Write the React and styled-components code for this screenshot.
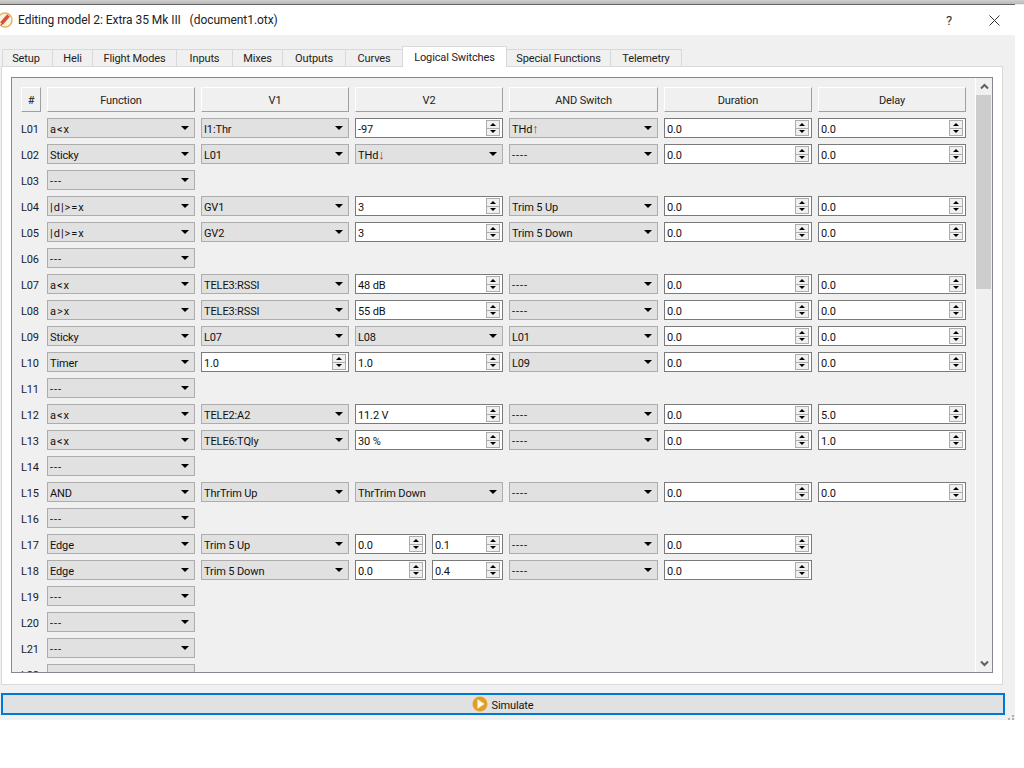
import React from "react";
import styled, { createGlobalStyle } from "styled-components";

const GlobalStyle = createGlobalStyle`
  html, body {
    margin: 0;
    padding: 0;
    background: #fff;
  }
  body {
    font-family: Roboto, "Open Sans", "Liberation Sans", sans-serif;
    font-size: 11px;
    letter-spacing: -0.12px;
    color: #000;
    overflow: hidden;
  }
`;

const Page = styled.div`
  width: 1024px;
  height: 768px;
  overflow: hidden;
  background: #fff;
`;

const Desktop = styled.div`
  height: 5px;
  background: linear-gradient(#cfcfcf, #bdbdbd 70%, #fff);
`;

const DesktopEdge = styled.div`
  height: 4px;
  width: 1015px;
  background: linear-gradient(#d0d0d0, #b8b8b8);
  border-bottom: 1px solid #666;
`;

const Dialog = styled.div`
  width: 1015px;
`;

const TitleBar = styled.div`
  height: 30px;
  display: flex;
  align-items: center;
  background: #fff;
  font-size: 12px;
  letter-spacing: -0.05px;
  color: #222;
`;

const TitleText = styled.span`
  margin-left: 5px;
  flex: 1;
  white-space: pre;
`;

const HelpMark = styled.span`
  font-size: 13px;
  margin-right: 37px;
  color: #333;
`;

const CloseMark = styled.svg`
  width: 11px;
  height: 11px;
  margin-right: 15px;
`;

const Body = styled.div`
  height: 685px;
  background: #f0f0f0;
  padding: 11px 0 0 1px;
  box-sizing: border-box;
  position: relative;
`;

const TabBar = styled.div`
  display: flex;
  align-items: flex-end;
  height: 21px;
  padding-left: 1px;
  position: relative;
  z-index: 1;
  margin-bottom: -1px;
`;

const Tab = styled.div`
  width: ${p => p.$w}px;
  height: ${p => (p.$active ? 21 : 18)}px;
  box-sizing: border-box;
  display: flex;
  align-items: center;
  justify-content: center;
  background: ${p => (p.$active ? "#fff" : "#f0f0f0")};
  border: 1px solid #d9d9d9;
  border-bottom: ${p => (p.$active ? "none" : "1px solid #d9d9d9")};
  margin-left: -1px;
  color: #222;
  &:first-child {
    margin-left: 0;
    padding-right: 3px;
  }
`;

const Pane = styled.div`
  width: 1002px;
  height: 619px;
  box-sizing: border-box;
  background: #fff;
  border: 1px solid #d9d9d9;
  padding: 10px 9px 11px 9px;
`;

const ScrollArea = styled.div`
  height: 100%;
  box-sizing: border-box;
  border: 1px solid #828790;
  background: #f0f0f0;
  display: flex;
  overflow: hidden;
`;

const TableWrap = styled.div`
  flex: 1;
  padding: 9px 0 0 9px;
  overflow: hidden;
`;

const Grid = styled.div`
  display: grid;
  grid-template-columns: 20px 148px 148px 148px 149px 148px 148px;
  grid-template-rows: 25px;
  grid-auto-rows: 20px;
  column-gap: 6px;
  row-gap: 6px;
  align-items: stretch;
`;

const HeaderCell = styled.div`
  box-sizing: border-box;
  display: flex;
  align-items: center;
  justify-content: center;
  padding-top: 2px;
  background: #f0f0f0;
  border: 1px solid;
  border-color: #fff #a0a0a0 #a0a0a0 #fff;
  color: #222;
`;

const RowLabel = styled.div`
  box-sizing: border-box;
  display: flex;
  align-items: center;
  padding-top: 2px;
  color: #1a1a2a;
  white-space: nowrap;
`;

const Combo = styled.div`
  display: flex;
  align-items: center;
  justify-content: space-between;
  box-sizing: border-box;
  background: #e1e1e1;
  border: 1px solid #adadad;
  padding: 0 5px 0 2px;
  color: #111;
  white-space: nowrap;
`;

const ValueText = styled.span`
  padding-top: 2px;
  letter-spacing: ${p => (p.$wide ? "1px" : "inherit")};
`;

const ComboArrow = styled.span`
  width: 0;
  height: 0;
  border-left: 4px solid transparent;
  border-right: 4px solid transparent;
  border-top: 4px solid #000;
`;

const Red = styled.span`
  color: #c02c18;
  font-family: "Liberation Sans", sans-serif;
  font-size: 13px;
  line-height: 1;
`;

const Spin = styled.div`
  display: flex;
  align-items: center;
  justify-content: space-between;
  box-sizing: border-box;
  background: #fff;
  border: 1px solid #7a7a7a;
  padding: 0 2px 0 2px;
  color: #111;
  white-space: nowrap;
`;

const SpinButtons = styled.div`
  display: flex;
  flex-direction: column;
  width: 14px;
  height: 16px;
  background: #f0f0f0;
`;

const SpinButton = styled.div`
  flex: 1;
  display: flex;
  align-items: center;
  justify-content: center;
  border: 1px solid #adadad;
  border-top: ${p => (p.$down ? "none" : "1px solid #adadad")};
`;

const SpinArrow = styled.span`
  width: 0;
  height: 0;
  border-left: 3px solid transparent;
  border-right: 3px solid transparent;
  border-${p => (p.$down ? "top" : "bottom")}: 3px solid #000;
`;

const Pair = styled.div`
  display: grid;
  grid-template-columns: 71px 71px;
  column-gap: 6px;
`;

const ScrollBar = styled.div`
  width: 17px;
  box-sizing: border-box;
  border-left: 1px solid #fff;
  background: #f0f0f0;
  display: flex;
  flex-direction: column;
`;

const ScrollStep = styled.div`
  height: 17px;
  display: flex;
  align-items: center;
  justify-content: center;
`;

const ScrollThumb = styled.div`
  height: 194px;
  margin-right: 1px;
  background: #cdcdcd;
`;

const ScrollSpace = styled.div`
  flex: 1;
`;

const Footer = styled.div`
  padding-top: 8px;
`;

const SimulateButton = styled.div`
  width: 1004px;
  height: 22px;
  box-sizing: border-box;
  border: 2px solid #0078d7;
  background: #e1e1e1;
  display: flex;
  align-items: center;
  justify-content: center;
  gap: 3px;
  color: #111;
`;

const Grip = styled.svg`
  position: absolute;
  right: 1px;
  bottom: 0;
  width: 6px;
  height: 5px;
`;

const Chevron = ({ down }) => (
  <svg width="9" height="7" viewBox="0 0 9 7">
    <path
      d={down ? "M1 1.5 L4.5 5 L8 1.5" : "M1 5.5 L4.5 2 L8 5.5"}
      fill="none"
      stroke="#606060"
      strokeWidth="2"
    />
  </svg>
);

const SpinBox = ({ value }) => (
  <Spin>
    <ValueText>{value}</ValueText>
    <SpinButtons>
      <SpinButton><SpinArrow /></SpinButton>
      <SpinButton $down><SpinArrow $down /></SpinButton>
    </SpinButtons>
  </Spin>
);

// dashes and operators are narrower in this font than in the original
const isSymbolic = v => typeof v === "string" && /^[-|dax<>=]+$/.test(v);

const Select = ({ children }) => (
  <Combo>
    <ValueText $wide={isSymbolic(children)}>{children}</ValueText>
    <ComboArrow />
  </Combo>
);

const tabs = [
  ["Setup", 51], ["Heli", 41], ["Flight Modes", 85], ["Inputs", 57], ["Mixes", 51],
  ["Outputs", 64], ["Curves", 58], ["Logical Switches", 105], ["Special Functions", 105], ["Telemetry", 72],
];

const headers = ["#", "Function", "V1", "V2", "AND Switch", "Duration", "Delay"];

const n = value => ({ n: value });
const zero = n("0.0");

// plain value = combo box, n() = spin box
const rows = [
  ["a<x", "I1:Thr", n("-97"), <>THd<Red>↑</Red></>, zero, zero],
  ["Sticky", "L01", <>THd<Red>↓</Red></>, "----", zero, zero],
  ["---"],
  ["|d|>=x", "GV1", n("3"), "Trim 5 Up", zero, zero],
  ["|d|>=x", "GV2", n("3"), "Trim 5 Down", zero, zero],
  ["---"],
  ["a<x", "TELE3:RSSI", n("48 dB"), "----", zero, zero],
  ["a>x", "TELE3:RSSI", n("55 dB"), "----", zero, zero],
  ["Sticky", "L07", "L08", "L01", zero, zero],
  ["Timer", n("1.0"), n("1.0"), "L09", zero, zero],
  ["---"],
  ["a<x", "TELE2:A2", n("11.2 V"), "----", zero, n("5.0")],
  ["a<x", "TELE6:TQly", n("30 %"), "----", zero, n("1.0")],
  ["---"],
  ["AND", "ThrTrim Up", "ThrTrim Down", "----", zero, zero],
  ["---"],
  ["Edge", "Trim 5 Up", { pair: ["0.0", "0.1"] }, "----", zero],
  ["Edge", "Trim 5 Down", { pair: ["0.0", "0.4"] }, "----", zero],
  ["---"],
  ["---"],
  ["---"],
  ["---"],
];

const renderValue = (v, key) => {
  if (v && v.n) return <SpinBox key={key} value={v.n} />;
  if (v && v.pair) {
    return (
      <Pair key={key}>
        <SpinBox value={v.pair[0]} />
        <SpinBox value={v.pair[1]} />
      </Pair>
    );
  }
  return <Select key={key}>{v}</Select>;
};

export default function App() {
  return (
    <Page>
      <GlobalStyle />
      <Desktop><DesktopEdge /></Desktop>
      <Dialog>
        <TitleBar>
          <svg width="13" height="16" viewBox="0 0 13 16">
            <circle cx="5" cy="8" r="7" fill="#fbf3e2" stroke="#e8b060" strokeWidth="1.4" />
            <path d="M1.5 11.5 L8.5 3.5" stroke="#d9503c" strokeWidth="3.6" />
            <path d="M1 13.5 L2.5 11" stroke="#8a5a40" strokeWidth="1" />
          </svg>
          <TitleText>Editing model 2: Extra 35 Mk III   (document1.otx)</TitleText>
          <HelpMark>?</HelpMark>
          <CloseMark viewBox="0 0 11 11">
            <path d="M0.5 0.5 L10.5 10.5 M10.5 0.5 L0.5 10.5" stroke="#333" strokeWidth="1" />
          </CloseMark>
        </TitleBar>
        <Body>
          <TabBar>
            {tabs.map(([label, w]) => (
              <Tab key={label} $w={w} $active={label === "Logical Switches"}>{label}</Tab>
            ))}
          </TabBar>
          <Pane>
            <ScrollArea>
              <TableWrap>
                <Grid>
                  {headers.map(h => <HeaderCell key={h}>{h}</HeaderCell>)}
                  {rows.map((row, i) => (
                    <React.Fragment key={i}>
                      <RowLabel>L{String(i + 1).padStart(2, "0")}</RowLabel>
                      {row.map((v, j) => renderValue(v, j))}
                      {Array.from({ length: 6 - row.length }).map((_, j) => <span key={"e" + j} />)}
                    </React.Fragment>
                  ))}
                </Grid>
              </TableWrap>
              <ScrollBar>
                <ScrollStep><Chevron /></ScrollStep>
                <ScrollThumb />
                <ScrollSpace />
                <ScrollStep><Chevron down /></ScrollStep>
              </ScrollBar>
            </ScrollArea>
          </Pane>
          <Footer>
            <SimulateButton>
              <svg width="16" height="16" viewBox="0 0 16 16">
                <circle cx="8" cy="8" r="7.5" fill="#e0a028" />
                <path d="M5.5 3.2 L12.5 8 L5.5 12.8 Z" fill="#fff8e8" />
              </svg>
              <ValueText>Simulate</ValueText>
            </SimulateButton>
          </Footer>
          <Grip viewBox="0 0 6 5">
            <path d="M4 0h2v2h-2z M0 3h2v2h-2z M4 3h2v2h-2z" fill="#b0b0b0" />
          </Grip>
        </Body>
      </Dialog>
    </Page>
  );
}
